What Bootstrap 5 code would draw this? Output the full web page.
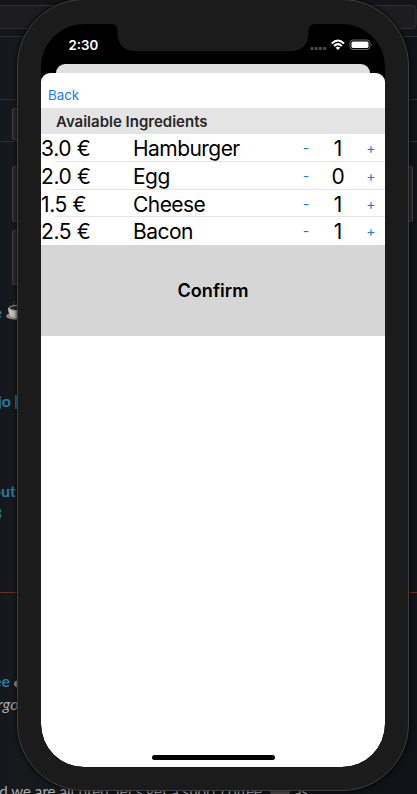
<!DOCTYPE html>
<html lang="en">
<head>
<meta charset="utf-8">
<meta name="viewport" content="width=device-width, initial-scale=1">
<title>Available Ingredients</title>
<link href="https://cdn.jsdelivr.net/npm/bootstrap@5.3.0/dist/css/bootstrap.min.css" rel="stylesheet">
<style>
body{width:417px;height:794px;background:#15181c;font-family:Inter,"Liberation Sans",sans-serif;color:#000}
.backdrop{inset:0;background:linear-gradient(90deg,#14181d,#17191c 18px,#101216 210px,#101217)}
.backdrop svg{position:absolute;left:0;top:0}
.note{position:absolute;font:16px/20px Lato,sans-serif;white-space:nowrap;color:#a9abad}
.note-link{color:#2879a5;font-weight:700}
.n1{right:415px;top:302px}.n2{right:406px;top:391px}.n3{right:401px;top:481px}.n4{right:415px;top:503px}
.n5{right:407px;top:671px}.n6{right:393px;top:694px;font-style:italic}.n7{right:109px;top:781px;font-size:15.1px}
.device{width:392px;height:792px;margin:-1px 0 0 17px;padding:24px 23px 23px;background:#1b1b1b;border:1px solid #3e3f3f;border-radius:67px;box-shadow:0 0 5px #000}
.viewport{height:743px;background:#000;border-radius:43px}
.status{height:40px;color:#fff}
.clock{font-size:13.3px;font-weight:600;line-height:20px;padding:11px 0 0 27.5px}
.notch{left:70px;top:0}
.status-icons{left:268px;top:14px}
.sheet-back{height:9px;margin:0 15px;background:#e0e0e0;border-radius:9px 9px 0 0}
.sheet-wrap{background:linear-gradient(90deg,#000 15px,#e0e0e0 15px,#e0e0e0 329px,#000 329px) 0 0/100% 10px no-repeat}
.sheet{height:694px;background:#fff;border-radius:9px 9px 43px 43px}
.bar{height:35px;padding:12px 0 0 7px}
.tap{border:0;background:none;padding:0;color:#1a7cf5}
.back{font-size:13.3px;line-height:20px}
.section-title{height:26px;background:#e4e4e4;padding-left:15px;font-size:15px;font-weight:600;line-height:27px;color:#272727;margin:0}
.item-row{height:27.75px;font-size:21px;line-height:30px;position:relative;white-space:nowrap}
.item-row+.item-row::before{content:"";position:absolute;left:14px;right:0;top:-1px;height:1px;background:#e5e5e5}
.price{width:92px;letter-spacing:-.35px}.item-name{width:166px;letter-spacing:-.55px}
.step{width:14px;height:28px;font-size:14px;line-height:28px;text-align:center}
.step-up{width:16px;height:27px;line-height:27px}
.count{width:50px;text-align:center}
.confirm{height:91px;background:#d6d6d6;border:0;font-size:18.1px;font-weight:600;color:#000}
.home{width:123px;height:5px;border-radius:3px;background:#000;margin-bottom:7px}
</style>
</head>
<body class="position-relative overflow-hidden m-0">
<div class="backdrop position-absolute overflow-hidden">
<svg width="417" height="794" fill="none">
<rect width="417" height="36" fill="#151517"/>
<rect x="-20" y="5.500" width="436" height="23" rx="4" fill="#1d1d1f" stroke="#313133"/>
<path d="M0 36.500H417M0 99.500H417M0 141.500H417" stroke="#2d2f32"/>
<path d="M0 592.500H417" stroke="#6b2c20"/>
<g transform="translate(6 301)"><path d="M8 5q-1-3 1-5m3 6q-2-3 1-5" stroke="#45413e"/><ellipse cx="10" cy="15" rx="10" ry="3.700" fill="#8e8984"/><path d="M2 7q0 10 9 10t9-10z" fill="#c5c0ba"/><ellipse cx="11" cy="7" rx="8" ry="2.500" fill="#33231c" stroke="#aaa49e"/></g>
<ellipse cx="19" cy="684" rx="5" ry="4" fill="#a29c96"/>
<ellipse cx="280" cy="792" rx="10" ry="4" fill="#55524f"/>
</svg>
<div class="note note-link n1">coffee</div>
<div class="note note-link n2">dojo</div>
<div class="note note-link n3">about</div>
<div class="note note-link n4">3</div>
<div class="note note-link n5">coffee</div>
<div class="note n6">forgot</div>
<div class="note n7">and we are all tired, let's get a short coffee <span class="ps-4 ms-1">as</span></div>
<svg width="417" height="794"><rect x="15" y="395" width="2" height="14" fill="#2879a5"/>
<g fill="#2c2c2c" stroke="#424242"><rect x="12.500" y="108.500" width="12" height="31" rx="1"/><rect x="12.500" y="166.500" width="12" height="55" rx="1"/><rect x="12.500" y="230.500" width="12" height="54" rx="1"/><rect x="402.500" y="166.500" width="10" height="55" rx="1"/></g></svg>
</div>
<main class="device position-relative">
<div class="viewport position-relative overflow-hidden">
<header class="status position-relative">
<svg class="notch position-absolute" width="204" height="28"><path d="M0 0H204Q198 0 197.500 6V9Q197 27 179 27H25Q7 27 6.500 9V6Q6 0 0 0" fill="#1b1b1b"/></svg>
<div class="clock">2:30</div>
<svg class="status-icons position-absolute" width="66" height="14" fill="none">
<g fill="#4b4b4b"><rect x="1.500" y="9" width="3" height="3" rx=".8"/><rect x="5.700" y="9" width="3" height="3" rx=".8"/><rect x="9.900" y="9" width="3" height="3" rx=".8"/><rect x="14.100" y="9" width="3" height="3" rx=".8"/></g>
<path d="M22.800 5.500Q28.900-.5 35 5.500M25 8Q28.900 4.300 32.800 8" stroke="#fff" stroke-width="2"/><path d="M26.600 9.700Q28.900 7.700 31.200 9.700L28.900 12z" fill="#fff"/>
<rect x="41" y="2" width="20" height="9.500" rx="3" stroke="#666"/><rect x="42.500" y="3.500" width="17" height="6.500" rx="1.600" fill="#fff"/><path d="M62.300 5q1.500 1.700 0 3.500z" fill="#666"/>
</svg>
</header>
<div class="sheet-back"></div>
<div class="sheet-wrap">
<section class="sheet d-flex flex-column">
<div class="bar"><button class="tap back d-block">Back</button></div>
<h1 class="section-title">Available Ingredients</h1>
<div>
<div class="item-row d-flex"><span class="price">3.0 €</span><span class="item-name">Hamburger</span><button class="tap step">-</button><span class="count">1</span><button class="tap step step-up">+</button></div>
<div class="item-row d-flex"><span class="price">2.0 €</span><span class="item-name">Egg</span><button class="tap step">-</button><span class="count">0</span><button class="tap step step-up">+</button></div>
<div class="item-row d-flex"><span class="price">1.5 €</span><span class="item-name">Cheese</span><button class="tap step">-</button><span class="count">1</span><button class="tap step step-up">+</button></div>
<div class="item-row d-flex"><span class="price">2.5 €</span><span class="item-name">Bacon</span><button class="tap step">-</button><span class="count">1</span><button class="tap step step-up">+</button></div>
</div>
<button class="confirm w-100">Confirm</button>
<div class="home mt-auto mx-auto"></div>
</section>
</div>
</div>
</main>
<script src="https://cdn.jsdelivr.net/npm/bootstrap@5.3.0/dist/js/bootstrap.bundle.min.js"></script>
</body>
</html>
